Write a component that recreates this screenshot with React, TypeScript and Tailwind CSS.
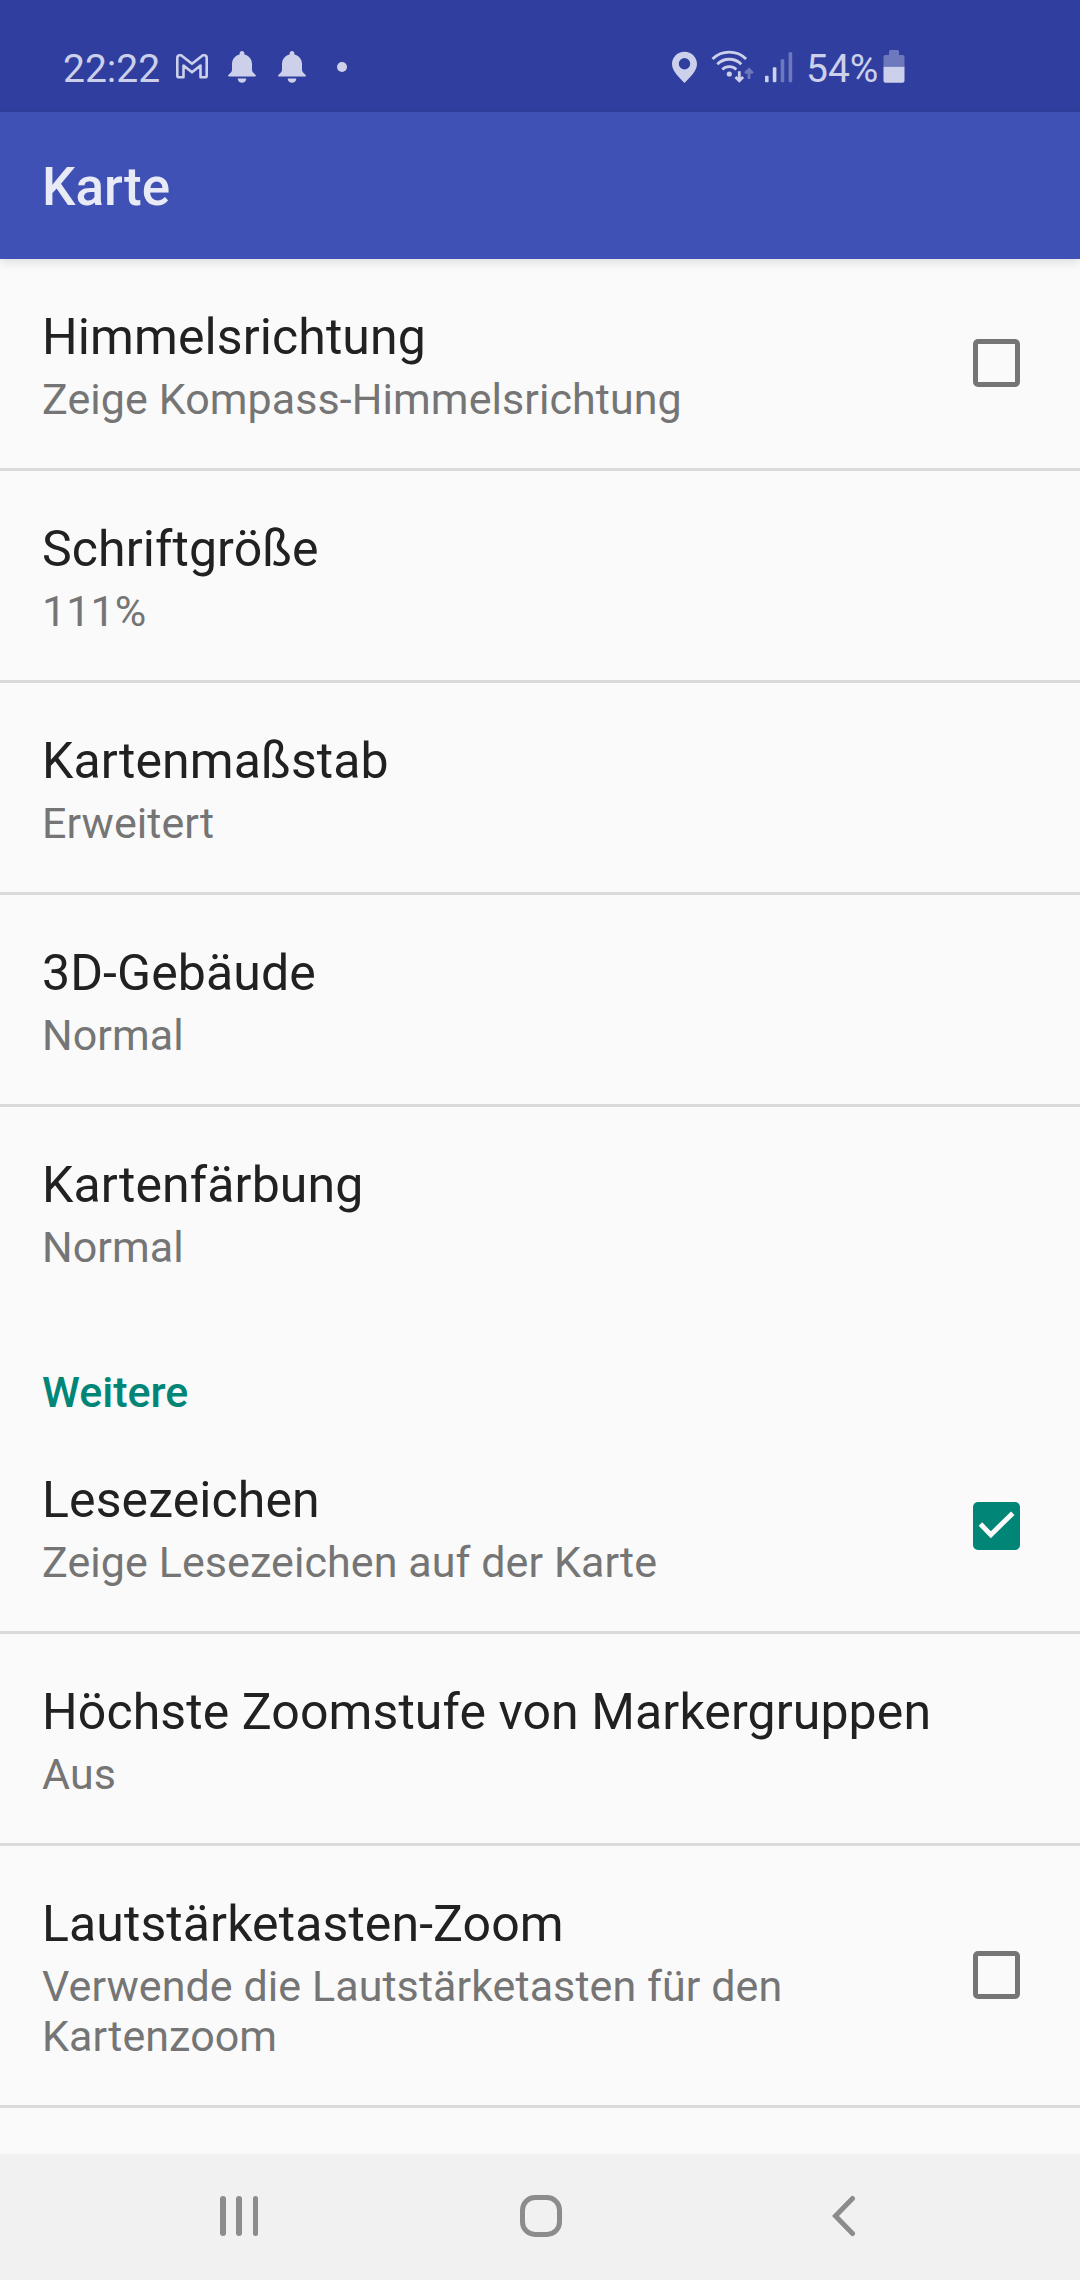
import { useState } from 'react';
import clsx from 'clsx';

interface Preference {
  key: string;
  title: string;
  summary: string;
  checkable?: boolean;
}

const mapPreferences: Preference[] = [
  { key: 'compass', title: 'Himmelsrichtung', summary: 'Zeige Kompass-Himmelsrichtung', checkable: true },
  { key: 'fontSize', title: 'Schriftgröße', summary: '111%' },
  { key: 'scale', title: 'Kartenmaßstab', summary: 'Erweitert' },
  { key: 'buildings', title: '3D-Gebäude', summary: 'Normal' },
  { key: 'tint', title: 'Kartenfärbung', summary: 'Normal' },
];

const morePreferences: Preference[] = [
  { key: 'bookmarks', title: 'Lesezeichen', summary: 'Zeige Lesezeichen auf der Karte', checkable: true },
  { key: 'markerZoom', title: 'Höchste Zoomstufe von Markergruppen', summary: 'Aus' },
  {
    key: 'volumeZoom',
    title: 'Lautstärketasten-Zoom',
    summary: 'Verwende die Lautstärketasten für den Kartenzoom',
    checkable: true,
  },
];

function BellIcon() {
  return (
    <svg width="30" height="40" viewBox="0 0 30 40" fill="currentColor">
      <path d="M15 3c1.400 0 2.400 1 2.400 2.400v1C22 7.600 25 11.300 25 16v5.500c0 1.500.4 2.300 1.400 3.300l2 1.900c.8.8.6 1.900-.5 1.900H2.100c-1.100 0-1.300-1.100-.5-1.900l2-1.900c1-1 1.400-1.800 1.400-3.300V16c0-4.700 3-8.400 7.600-9.600v-1C12.600 4 13.600 3 15 3z" />
      <path d="M10.700 30.500h8.600a4.300 4.300 0 0 1-8.600 0z" />
    </svg>
  );
}

function StatusBar() {
  return (
    <div className="flex h-[112px] shrink-0 items-center bg-[#303f9f] pt-6 text-[#cdd0ea]">
      <span className="ml-[63px] w-[113px] pt-px text-[39px] leading-10">22:22</span>
      <svg width="32" height="40" viewBox="0 0 32 40" fill="none" stroke="currentColor" strokeWidth="2.600" strokeLinejoin="round">
        <path d="M3.200 29.300q-1.900 0-1.900-1.900V10q0-2.700 2.500-2.700h1.300L16 15.800 26.900 7.300h1.300q2.500 0 2.500 2.700v17.400q0 1.900-1.900 1.900h-4.300V17.600L16 24.300 7.500 17.600v11.700z" />
      </svg>
      <div className="ml-[19px] flex gap-5">
        <BellIcon />
        <BellIcon />
      </div>
      <div className="ml-[30px] mt-[-2px] size-[10px] rounded-full bg-current" />

      <svg className="ml-[325px]" width="25" height="40" viewBox="0 0 25 40" fill="currentColor">
        <path
          fillRule="evenodd"
          d="M12.500 3.700C5.600 3.700 0 9.100 0 16c0 7.500 7.500 13.500 12.500 19C17.500 29.500 25 23.500 25 16 25 9.100 19.400 3.700 12.500 3.700zm0 6.300a5.700 5.700 0 1 1 0 11.400 5.700 5.700 0 0 1 0-11.400z"
        />
      </svg>
      <svg className="ml-[14px]" width="44" height="40" viewBox="0 0 44 40" fill="none" stroke="currentColor" strokeWidth="2.800">
        <path d="M1.500 11a24 24 0 0 1 33.600 0M6.300 16.200a17 17 0 0 1 24 0M11.300 21.500a10 10 0 0 1 14 0" />
        <circle cx="18.300" cy="26" r="2.600" fill="currentColor" stroke="none" />
        <path d="M28.300 23.300v9.500M24.500 29l3.800 3.800 3.800-3.800" />
        <path d="M38 31v-9.500M34.200 25.300l3.800-3.800 3.800 3.800" opacity=".4" />
      </svg>
      <svg className="ml-[10px]" width="28" height="40" viewBox="0 0 28 40" fill="currentColor">
        <rect x="0" y="27.700" width="3.600" height="6.600" rx="1" />
        <rect x="7.800" y="19.300" width="3.600" height="15" rx="1" />
        <rect x="15.700" y="11.300" width="3.600" height="23" rx="1" opacity=".4" />
        <rect x="23.600" y="4.300" width="3.600" height="30" rx="1" opacity=".4" />
      </svg>
      <span className="ml-[13px] w-[77px] pt-px text-[39px] leading-10">54%</span>
      <svg width="22" height="40" viewBox="0 0 22 40" fill="currentColor">
        <path d="M7.500 2h7q1.500 0 1.500 1.500V7h3.500q2 0 2 2v9.700H.5V9q0-2 2-2H6V3.500Q6 2 7.500 2z" opacity=".4" />
        <path d="M.5 18.700h21v14q0 2-2 2h-17q-2 0-2-2z" />
      </svg>
    </div>
  );
}

function Checkbox({ checked }: { checked: boolean }) {
  return (
    <div
      className={clsx(
        'mb-px size-[47.5px] shrink-0 rounded-[5px]',
        checked ? 'bg-[#008577]' : 'border-[5px] border-[#757575]'
      )}
    >
      {checked && (
        <svg viewBox="0 0 48 48" fill="none" stroke="#fafafa" strokeWidth="5">
          <path d="M7.500 22.300 18 33 40.200 11.300" />
        </svg>
      )}
    </div>
  );
}

interface PreferenceRowProps {
  item: Preference;
  checked: boolean;
  onToggle: () => void;
}

function PreferenceRow({ item, checked, onToggle }: PreferenceRowProps) {
  return (
    <div
      onClick={item.checkable ? onToggle : undefined}
      className="flex items-center border-b-[3px] border-[#dadada] pl-[42px] pr-[60px] last:border-b-0"
    >
      <div className="flex-1 pb-[44px] pt-[48px]">
        <div className="whitespace-nowrap text-[50px] leading-[60px] tracking-[0.1px] text-[#212121]">{item.title}</div>
        <div className="mt-[7px] max-w-[860px] text-[43px] leading-[50px] tracking-[0.08px] text-[#757575]">
          {item.summary}
        </div>
      </div>
      {item.checkable && <Checkbox checked={checked} />}
    </div>
  );
}

export default function App() {
  const [values, setValues] = useState<Record<string, boolean>>({
    compass: false,
    bookmarks: true,
    volumeZoom: false,
  });

  const toggle = (key: string) => {
    setValues((prev) => ({ ...prev, [key]: !prev[key] }));
  };

  const renderRow = (item: Preference) => (
    <PreferenceRow key={item.key} item={item} checked={!!values[item.key]} onToggle={() => toggle(item.key)} />
  );

  return (
    <div className="flex h-[2280px] w-[1080px] flex-col overflow-hidden bg-[#fafafa] font-[Roboto,sans-serif]">
      <StatusBar />

      {/* App bar */}
      <header className="z-10 flex h-[147px] shrink-0 items-center bg-[#3f51b5] pl-[42px] pt-[2px] shadow-[0_3px_10px_rgba(0,0,0,0.12)]">
        <h1 className="text-[53px] font-medium leading-[62px] text-[#e8eaf6]">Karte</h1>
      </header>

      {/* Settings list */}
      <main className="flex-1 overflow-hidden">
        <section>{mapPreferences.map(renderRow)}</section>
        <h2 className="h-[106px] pl-[42px] pt-[51px] text-[43px] font-medium leading-[50px] text-[#008577]">Weitere</h2>
        <section>
          {morePreferences.map(renderRow)}
          <div className="h-12" />
        </section>
      </main>

      {/* Navigation bar */}
      <nav className="flex h-[126px] shrink-0 items-center bg-[#f1f1f1] pb-[2px] pl-[220px] text-[#8c8c8c]">
        <div className="flex w-[38px] justify-between">
          <div className="h-10 w-[5.5px] rounded-full bg-current" />
          <div className="h-10 w-[5.5px] rounded-full bg-current" />
          <div className="h-10 w-[5.5px] rounded-full bg-current" />
        </div>
        <div className="ml-[262px] size-[42px] rounded-[15px] border-[5px] border-current" />
        <svg className="ml-[267px]" width="28" height="42" viewBox="0 0 28 42" fill="none" stroke="currentColor" strokeWidth="5" strokeLinecap="round">
          <path d="M23.500 3.500 6.500 21l17 17.500" />
        </svg>
      </nav>
    </div>
  );
}
